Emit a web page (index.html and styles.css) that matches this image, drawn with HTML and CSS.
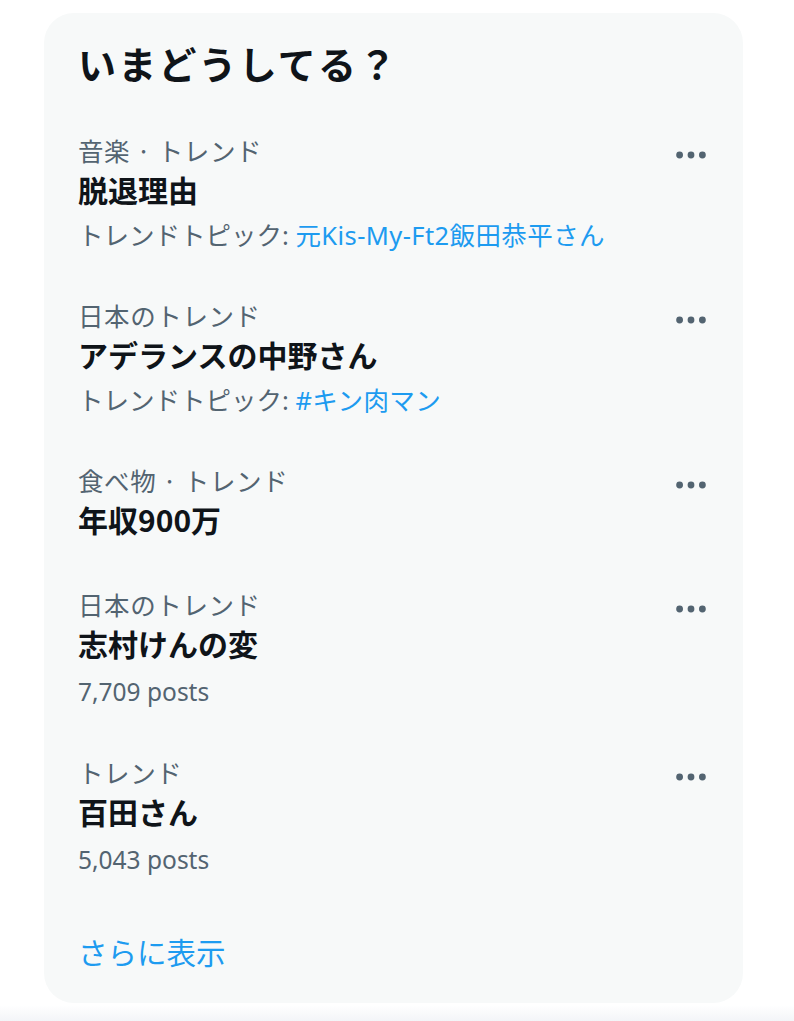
FILE: index.html
```html
<!DOCTYPE html>
<html lang="ja">
<head>
<meta charset="utf-8">
<title>いまどうしてる？</title>
<link rel="stylesheet" href="styles.css">
</head>
<body>
<div class="page">
  <section class="card">
    <h2 class="card-title">いまどうしてる？</h2>

    <div class="trend">
      <div class="trend-body">
        <div class="trend-label">音楽 · トレンド</div>
        <div class="trend-name">脱退理由</div>
        <div class="trend-sub">トレンドトピック: <span class="link">元Kis-My-Ft2飯田恭平さん</span></div>
      </div>
      <div class="more"><svg width="30" height="8" viewBox="0 0 30 8"><circle cx="3.6" cy="4" r="3.4"/><circle cx="15" cy="4" r="3.4"/><circle cx="26.4" cy="4" r="3.4"/></svg></div>
    </div>

    <div class="trend">
      <div class="trend-body">
        <div class="trend-label">日本のトレンド</div>
        <div class="trend-name">アデランスの中野さん</div>
        <div class="trend-sub">トレンドトピック: <span class="link">#キン肉マン</span></div>
      </div>
      <div class="more"><svg width="30" height="8" viewBox="0 0 30 8"><circle cx="3.6" cy="4" r="3.4"/><circle cx="15" cy="4" r="3.4"/><circle cx="26.4" cy="4" r="3.4"/></svg></div>
    </div>

    <div class="trend">
      <div class="trend-body">
        <div class="trend-label">食べ物 · トレンド</div>
        <div class="trend-name">年収900万</div>
      </div>
      <div class="more"><svg width="30" height="8" viewBox="0 0 30 8"><circle cx="3.6" cy="4" r="3.4"/><circle cx="15" cy="4" r="3.4"/><circle cx="26.4" cy="4" r="3.4"/></svg></div>
    </div>

    <div class="trend">
      <div class="trend-body">
        <div class="trend-label">日本のトレンド</div>
        <div class="trend-name">志村けんの変</div>
        <div class="trend-sub posts">7,709 posts</div>
      </div>
      <div class="more"><svg width="30" height="8" viewBox="0 0 30 8"><circle cx="3.6" cy="4" r="3.4"/><circle cx="15" cy="4" r="3.4"/><circle cx="26.4" cy="4" r="3.4"/></svg></div>
    </div>

    <div class="trend">
      <div class="trend-body">
        <div class="trend-label">トレンド</div>
        <div class="trend-name">百田さん</div>
        <div class="trend-sub posts">5,043 posts</div>
      </div>
      <div class="more"><svg width="30" height="8" viewBox="0 0 30 8"><circle cx="3.6" cy="4" r="3.4"/><circle cx="15" cy="4" r="3.4"/><circle cx="26.4" cy="4" r="3.4"/></svg></div>
    </div>

    <a class="show-more" href="#">さらに表示</a>
  </section>
  <div class="fade"></div>
</div>
</body>
</html>
```

FILE: styles.css
```css
html, body {
  margin: 0;
  padding: 0;
  background: #ffffff;
}

body {
  font-family: "Noto Sans", "Noto Sans CJK JP", sans-serif;
  color: #0f1419;
}

.page {
  width: 794px;
  height: 1021px;
  overflow: hidden;
  padding-top: 13px;
  box-sizing: border-box;
  display: flex;
  flex-direction: column;
  align-items: flex-start;
}

.card {
  margin-left: 44px;
  width: 699px;
  height: 990px;
  box-sizing: border-box;
  background: #f7f9f9;
  border-radius: 30px;
  display: flex;
  flex-direction: column;
  flex-shrink: 0;
}

.card-title {
  margin: 0;
  padding: 22px 34px 18px;
  font-family: "Noto Sans CJK JP", sans-serif;
  font-size: 38px;
  font-weight: 700;
  line-height: 56px;
  letter-spacing: 2.2px;
}

.trend {
  display: flex;
  align-items: flex-start;
  padding: 23px 37px 23px 34px;
}

.trend-body {
  flex: 1;
  display: flex;
  flex-direction: column;
}

.trend-label {
  font-family: "Noto Sans CJK JP", sans-serif;
  font-size: 25.5px;
  line-height: 36px;
  color: #536471;
  letter-spacing: 0.6px;
}

.trend-name {
  font-family: "Noto Sans CJK JP", sans-serif;
  font-size: 30px;
  font-weight: 700;
  line-height: 42px;
}

.trend-sub {
  margin-top: 9px;
  font-family: "Noto Sans", "Noto Sans CJK JP", sans-serif;
  font-size: 25.5px;
  line-height: 32px;
  color: #536471;
}

.trend-sub.posts {
  font-size: 24.5px;
  margin-top: 12px;
}

.link {
  color: #1d9bf0;
  letter-spacing: 0.4px;
}

.more {
  margin-top: 5px;
  height: 36px;
  display: flex;
  align-items: center;
}

.more svg {
  fill: #536471;
  display: block;
}

.show-more {
  margin-top: 31px;
  padding: 0 34px;
  font-family: "Noto Sans CJK JP", sans-serif;
  font-size: 29.5px;
  line-height: 42px;
  color: #1d9bf0;
  text-decoration: none;
}

.fade {
  margin-top: 2px;
  width: 794px;
  height: 16px;
  flex-shrink: 0;
  background: linear-gradient(to bottom, #ffffff, #f3f5f8);
}
```
